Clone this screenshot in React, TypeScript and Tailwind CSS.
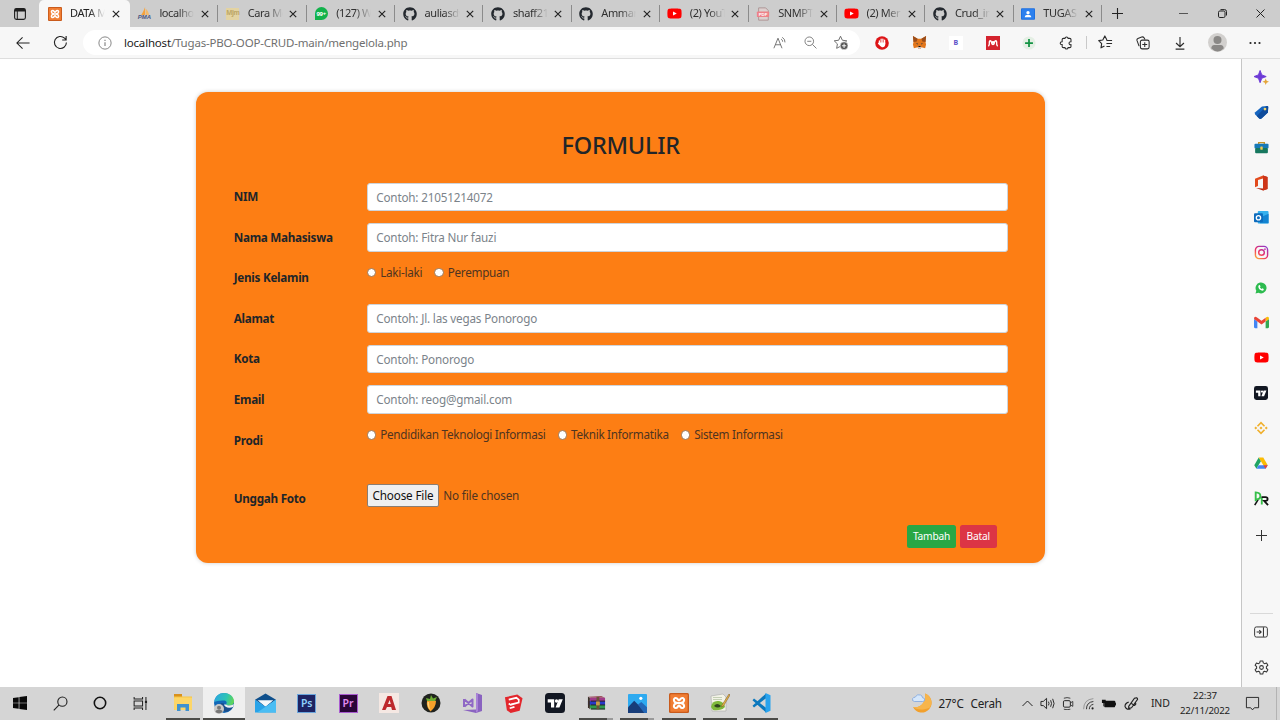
import React from "react";
import { FaGithub, FaWhatsapp, FaYoutube } from "react-icons/fa";

type IconProps = { s?: number; className?: string };
type SvgProps = { s?: number; vb?: number; className?: string; children: React.ReactNode };

function Svg({ s = 16, vb = 16, className = "", children }: SvgProps) {
  return (
    <svg width={s} height={s} viewBox={`0 0 ${vb} ${vb}`} fill="none" className={`shrink-0 ${className}`}>
      {children}
    </svg>
  );
}

/* ---------- brand icons ---------- */

function Xampp({ s = 14 }: IconProps) {
  return (
    <Svg s={s} vb={20}>
      <rect width="20" height="20" rx="1.5" fill="#c95b1c" />
      <rect x="1.3" y="1.3" width="17.4" height="17.4" rx="1" fill="#f07d33" />
      <path
        d="M7.500 10h5M8 9.700C4.500 9.700 3.800 5 6.800 5c2 0 2 2.400 3.200 2.400S11.200 5 13.200 5c3 0 2.300 4.700-1.200 4.700M8 10.300C4.500 10.300 3.800 15 6.800 15c2 0 2-2.400 3.200-2.400s1.200 2.400 3.200 2.400c3 0 2.300-4.700-1.200-4.700"
        stroke="#fff"
        strokeWidth="2.100"
        strokeLinecap="round"
        strokeLinejoin="round"
      />
    </Svg>
  );
}

function PhpMyAdmin() {
  return (
    <div className="flex w-[15px] flex-col items-center">
      <Svg s={9} vb={8} className="-mb-px">
        <path d="M4.500 0v7H1C2.500 5 3.500 3 4.500 0z" fill="#f6a13c" />
        <path d="M5 1.500C7 3 7.800 5 8 7H5z" fill="#f3b96c" />
      </Svg>
      <span className="font-['Liberation_Sans'] text-[6px] leading-[5px] font-bold text-[#4b5580] italic">PMA</span>
    </div>
  );
}

function Mjm() {
  return (
    <div className="flex h-[12px] w-[13px] items-center justify-center bg-[#e3d3a2] text-[6.500px] leading-none font-bold tracking-[-0.5px] text-[#bda766]">
      Mjm
    </div>
  );
}

function WhatsappBadge() {
  return (
    <div className="flex size-[13px] items-center justify-center rounded-full rounded-bl-[3px] bg-[#12b24b] text-[6px] leading-none font-bold tracking-[-0.3px] text-white">
      99+
    </div>
  );
}

function PdfIcon() {
  return (
    <Svg s={14}>
      <path d="M3 1h8l3 3v11H3z" fill="#ddd0cf" stroke="#a98f8f" />
      <rect x="1" y="5" width="14" height="6.500" rx="1" fill="#ee8288" />
      <text x="8" y="10" fontSize="5" fontWeight="700" textAnchor="middle" fill="#fff" fontFamily="Liberation Sans">PDF</text>
    </Svg>
  );
}

function YoutubeIcon({ s = 14 }: IconProps) {
  return (
    <span className="relative flex items-center justify-center">
      <span className="absolute h-[5px] w-[5px] bg-white" />
      <FaYoutube size={s} color="#f00" className="relative" />
    </span>
  );
}

function ClassroomIcon() {
  return (
    <Svg s={14}>
      <rect y="1.500" width="16" height="13" rx="1" fill="#1c6fe0" />
      <rect x="1" y="2.500" width="14" height="11" fill="#2c80ee" />
      <circle cx="8" cy="6.500" r="1.900" fill="#fff" />
      <path d="M4.300 11.600c0-3.600 7.400-3.600 7.400 0z" fill="#fff" />
    </Svg>
  );
}

function TradingView({ s = 14 }: IconProps) {
  return (
    <Svg s={s} vb={20}>
      <rect width="20" height="20" rx="3.500" fill="#121722" />
      <path d="M2.700 6.300h6.500v8.200H6V9.600H2.700zM13.700 6.300h4.100l-3.400 8.200h-3.800z" fill="#fff" />
      <circle cx="11.500" cy="8" r="1.650" fill="#fff" />
    </Svg>
  );
}

/* ---------- toolbar glyphs ---------- */

const CloseX = () => (
  <Svg s={8} vb={8}>
    <path d="M.8.8l6.400 6.400M7.200.8L.8 7.200" stroke="#222" strokeWidth="1.150" />
  </Svg>
);

const StarPath = "M8 1.300l2 4.300 4.700.6-3.400 3.300.8 4.700L8 12l-4.100 2.200.8-4.700L1.300 6.200 6 5.600z";

const tabs: { icon: React.ReactNode; title: string }[] = [
  { icon: <PhpMyAdmin />, title: "localhos" },
  { icon: <Mjm />, title: "Cara Me" },
  { icon: <WhatsappBadge />, title: "(127) W" },
  { icon: <FaGithub size={14} color="#24292f" />, title: "auliasdy" },
  { icon: <FaGithub size={14} color="#24292f" />, title: "shaff210" },
  { icon: <FaGithub size={14} color="#24292f" />, title: "Ammar" },
  { icon: <YoutubeIcon s={15} />, title: "(2) YouT" },
  { icon: <PdfIcon />, title: "SNMPT" },
  { icon: <YoutubeIcon s={15} />, title: "(2) Mer" },
  { icon: <FaGithub size={14} color="#24292f" />, title: "Crud_ins" },
  { icon: <ClassroomIcon />, title: "TUGAS" },
];

function Tab({ icon, title, active = false }: { icon: React.ReactNode; title: string; active?: boolean }) {
  return (
    <div
      className={`flex shrink-0 items-center ${
        active ? "h-[27px] w-[90.900px] rounded-t-[5px] bg-[#f7f7f7] pl-[1.500px]" : "h-[17px] w-[88.400px] border-r border-[#8b8b8b]"
      }`}
    >
      <div className="flex w-[29px] justify-center">{icon}</div>
      <div
        className={`ml-[0.500px] w-[35px] overflow-hidden mask-r-from-55% text-[11px] tracking-[-0.400px] whitespace-nowrap ${
          active ? "text-[#222]" : "text-[#303030]"
        }`}
      >
        {title}
      </div>
      <div className="ml-[5.500px] flex w-[10px] justify-center">
        <CloseX />
      </div>
    </div>
  );
}

function TabStrip() {
  return (
    <div className="flex h-[27px] shrink-0 items-center bg-[#cdcdcd]">
      <div className="flex w-[39px] justify-center pl-[1px]">
        <Svg s={12} vb={12}>
          <rect x=".6" y=".6" width="10.800" height="10.800" rx="1.800" stroke="#1d1d1d" strokeWidth="1.100" />
          <path d="M.6 3.400V2.200Q.6.600 2.200.600h7.600q1.600 0 1.600 1.600v1.200z" fill="#1d1d1d" />
          <path d="M3.300 3v8" stroke="#1d1d1d" />
        </Svg>
      </div>
      <Tab icon={<Xampp />} title="DATA M" active />
      {tabs.map((t, i) => (
        <Tab key={i} icon={t.icon} title={t.title} />
      ))}
      <div className="flex w-[31px] justify-center">
        <Svg s={11} vb={11}>
          <path d="M5.500 0v11M0 5.500h11" stroke="#222" strokeWidth="1.100" />
        </Svg>
      </div>
      <div className="ml-auto flex items-center">
        <div className="flex w-[38.500px] justify-center">
          <Svg s={9} vb={9}><path d="M0 4.500h9" stroke="#555" /></Svg>
        </div>
        <div className="flex w-[38.500px] justify-center">
          <Svg s={9} vb={9}>
            <rect x=".5" y="2" width="6.500" height="6.500" rx="1.300" stroke="#222" />
            <path d="M2.500.600h4Q8.500.600 8.500 2.500v4" stroke="#222" />
          </Svg>
        </div>
        <div className="flex w-[38.500px] justify-center">
          <Svg s={9} vb={9}><path d="M.5.500l8 8M8.500.500l-8 8" stroke="#222" /></Svg>
        </div>
      </div>
    </div>
  );
}

const extensions: React.ReactNode[] = [
  <Svg s={14}>
    <circle cx="8" cy="8" r="7.800" fill="#dd1417" />
    <path d="M5 9V5.500M7 8V3.500M9 8V3.500M11 9V4.700" stroke="#fff" strokeWidth="1.400" strokeLinecap="round" />
    <path d="M4.300 7.500h7.400v2c0 4.500-4.500 4-6 1.700L3.200 8.500z" fill="#fff" />
  </Svg>,
  <Svg s={15}>
    <path d="M1 1l5 3h4l5-3-.7 6L15 10l-1 4-4-1-1 2H7l-1-2-4 1-1-4 .7-3z" fill="#e2761b" />
    <path d="M1 1l5 3-1 3-3.500.5zM15 1l-5 3 1 3 3.500.5z" fill="#9a4d1b" />
    <path d="M6 13l1-1h2l1 1-1 2H7z" fill="#d7c1b3" />
    <path d="M4 8.500l2.500.8-.5.900zM12 8.500l-2.500.8.5.900z" fill="#233447" />
    <path d="M7 11.800h2l.3 1H6.700z" fill="#161616" />
  </Svg>,
  <span className="flex size-[14px] items-center justify-center bg-white text-[7px] leading-none font-bold text-[#5b50c8]">B</span>,
  <Svg s={14}>
    <rect width="16" height="16" fill="#d4232e" />
    <circle cx="8" cy="7.300" r="1.700" fill="#fff" />
    <path d="M3 11.200Q4 10 3.800 8.300 3.500 5.600 5 5.400q1.200 0 1.400 2.400.4 2 1.600 2t1.600-2Q9.800 5.400 11 5.400q1.500.2 1.200 2.900-.2 1.700.8 2.900" stroke="#fff" strokeWidth="1.500" strokeLinecap="round" />
  </Svg>,
  <Svg s={14}>
    <circle cx="8" cy="8" r="7.500" fill="#e4efe4" />
    <path d="M8 3.500v9M3.500 8h9" stroke="#129343" strokeWidth="2" />
  </Svg>,
  <Svg s={14}>
    <path d="M5 2.700h1.800C7 .6 10.200.6 10.400 2.700h1.900q1.400 0 1.400 1.400v2.400c-3-.4-3 3.700 0 3.400v2q0 1.400-1.400 1.400h-1.900c-.2 2.200-3.400 2.200-3.600 0H5q-1.400 0-1.400-1.400V9.800C.6 9.600.6 6.700 3.600 6.500V4.100Q3.600 2.700 5 2.700z" stroke="#2b2b2b" strokeWidth="1.200" />
  </Svg>,
];

const actions: React.ReactNode[] = [
  <Svg s={15}>
    <path d="M9.500 5.300L7.300 1 5.100 5.300.800 6l3.100 3.200-.7 4.500 3.700-2" stroke="#2b2b2b" strokeWidth="1.200" strokeLinejoin="round" />
    <path d="M9 5.800h6M9 9h6M9 12.200h4" stroke="#2b2b2b" strokeWidth="1.200" />
  </Svg>,
  <Svg s={14}>
    <rect x="5" y="4.700" width="10" height="10" rx="2" stroke="#2b2b2b" strokeWidth="1.200" />
    <path d="M10 7v5.500M7.200 9.700h5.600M3.500 11.500L1.200 5.300q-.6-1.800 1-2.500l4.300-1.600q1.700-.6 2.700.9L10.300 4" stroke="#2b2b2b" strokeWidth="1.200" />
  </Svg>,
  <Svg s={14}>
    <path d="M8 1v11M3.500 8L8 12.300 12.500 8M3 15h10" stroke="#2b2b2b" strokeWidth="1.300" />
  </Svg>,
  <Svg s={19} vb={19}>
    <circle cx="9.500" cy="9.500" r="9.500" fill="#d2d0ce" />
    <circle cx="9.500" cy="7" r="4" fill="#8a8886" />
    <path d="M3.300 15.500q0-3.500 3-3.500h6.400q3 0 3 3.500-6 6-12.400 0z" fill="#8a8886" />
  </Svg>,
  <Svg s={12} vb={12}>
    <circle cx="1.500" cy="6" r="1.100" fill="#222" />
    <circle cx="6" cy="6" r="1.100" fill="#222" />
    <circle cx="10.500" cy="6" r="1.100" fill="#222" />
  </Svg>,
];

function Toolbar() {
  return (
    <div className="flex h-[32px] shrink-0 items-center border-b border-[#dedede] bg-[#f7f7f7]">
      <div className="flex w-[83px] items-center">
        <Svg s={14} className="ml-[16px]">
          <path d="M15.500 8H1M7.500 1.500L1 8l6.500 6.500" stroke="#222" strokeWidth="1.200" />
        </Svg>
        <Svg s={15} className="ml-[23px]">
          <path d="M14.300 8A6.400 6.400 0 1 1 12.300 3.300L14 5M14 1v4.300H9.800" stroke="#222" strokeWidth="1.200" />
        </Svg>
      </div>
      <div className="flex h-[25px] w-[776.500px] items-center rounded-full bg-white">
        <Svg s={14} className="ml-[15px]">
          <circle cx="8" cy="8" r="7" stroke="#777" />
          <path d="M8 7v4.500M8 4.300v1.300" stroke="#777" strokeWidth="1.200" />
        </Svg>
        <div className="ml-[12px] text-[11.500px] tracking-[-0.190px] whitespace-nowrap text-[#6f6f6f]">
          <span className="text-[#1c1c1c]">localhost</span>/Tugas-PBO-OOP-CRUD-main/mengelola.php
        </div>
        <div className="ml-auto flex items-center">
          <div className="flex w-[30px] items-center justify-center">
            <Svg s={14}>
              <path d="M1 14L5.700 2.500 10.300 14M2.600 10h6.200M9.300 3.500q1.800 1 1.700 3M10.500 1.500Q14 3.500 13.700 7.300" stroke="#666" />
            </Svg>
          </div>
          <div className="flex w-[30px] items-center justify-center">
            <Svg s={13}>
              <circle cx="6.500" cy="6.500" r="5.300" stroke="#666" />
              <path d="M10.300 10.300l5 5M4 6.500h5" stroke="#666" />
            </Svg>
          </div>
          <div className="flex w-[30px] items-center justify-center">
            <Svg s={15}>
              <path d={StarPath} stroke="#666" />
              <circle cx="11.800" cy="11.500" r="4.200" fill="#555" stroke="#fff" strokeWidth=".6" />
              <path d="M11.800 9.200v4.600M9.500 11.500h4.600" stroke="#fff" />
            </Svg>
          </div>
          <div className="w-[4.500px]" />
        </div>
      </div>
      <div className="ml-[4.500px] flex items-center">
        {extensions.map((e, i) => (
          <div key={i} className="flex w-[36.750px] items-center justify-center">{e}</div>
        ))}
      </div>
      <div className="ml-[1.500px] flex h-[13px] items-center border-l border-[#c9c9c9]">
        {actions.map((e, i) => (
          <div key={i} className="flex w-[37.400px] items-center justify-center">{e}</div>
        ))}
      </div>
    </div>
  );
}

/* ---------- form ---------- */

function Label({ children }: { children: React.ReactNode }) {
  return (
    <label className="w-[133px] shrink-0 text-[11.700px] leading-[18px] font-bold tracking-[-0.280px] text-[#212529]">{children}</label>
  );
}

function TextRow({ label, placeholder }: { label: string; placeholder: string }) {
  return (
    <div className="flex h-[40.550px] items-start">
      <div className="flex h-[27.500px] items-center">
        <Label>{label}</Label>
      </div>
      <input
        className="h-[28.500px] min-w-0 flex-1 rounded-[3px] border border-[#ced4da] bg-white px-[8.500px] text-[11.700px] tracking-[-0.180px] text-[#495057] outline-none placeholder:text-[#7b838a] placeholder:opacity-100"
        placeholder={placeholder}
      />
    </div>
  );
}

function RadioRow({ label, options, name }: { label: string; name: string; options: string[] }) {
  return (
    <div className="flex h-[40.550px] items-start">
      <div className="flex h-[27.500px] items-center">
        <Label>{label}</Label>
      </div>
      <div className="flex gap-[12px]">
        {options.map((o) => (
          <label key={o} className="flex h-[18px] items-center gap-[4px] text-[11.700px] tracking-[-0.280px] whitespace-nowrap text-[#4f3420]">
            <input type="radio" name={name} className="size-[9.500px] appearance-none rounded-full border border-[#9c7450] bg-white" />
            {o}
          </label>
        ))}
      </div>
    </div>
  );
}

function Form() {
  return (
    <main className="flex min-w-0 flex-1 justify-center bg-white pt-[33px]">
      <form className="flex h-[470.500px] w-[849.500px] flex-col rounded-[12px] bg-[#fd7e14] pr-[37.500px] pl-[38px] shadow-[0_0_4px_rgba(0,0,0,0.2)]">
        <h1 className="mt-[36px] text-center text-[23.500px] leading-[34px] font-medium tracking-[-0.250px] text-[#212529]">FORMULIR</h1>
        <div className="mt-[20.500px] flex flex-col">
          <TextRow label="NIM" placeholder="Contoh: 21051214072" />
          <TextRow label="Nama Mahasiswa" placeholder="Contoh: Fitra Nur fauzi" />
          <RadioRow label="Jenis Kelamin" name="jk" options={["Laki-laki", "Perempuan"]} />
          <TextRow label="Alamat" placeholder="Contoh: Jl. las vegas Ponorogo" />
          <TextRow label="Kota" placeholder="Contoh: Ponorogo" />
          <TextRow label="Email" placeholder="Contoh: reog@gmail.com" />
          <RadioRow
            label="Prodi"
            name="prodi"
            options={["Pendidikan Teknologi Informasi", "Teknik Informatika", "Sistem Informasi"]}
          />
        </div>
        <div className="mt-[18px] flex items-start">
          <div className="flex h-[27.500px] items-center">
            <Label>Unggah Foto</Label>
          </div>
          <div className="flex items-center gap-[4px] text-[11.700px] tracking-[-0.150px]">
            <button
              type="button"
              className="h-[22.500px] w-[72.500px] rounded-[2px] border border-[#8a7d72] bg-[#efefef] whitespace-nowrap text-[#111]"
            >
              Choose File
            </button>
            <span className="text-[#4f3420]">No file chosen</span>
          </div>
        </div>
        <div className="mt-[13px] flex justify-end gap-[3.500px] pr-[11px] text-[10.200px] tracking-[-0.200px] text-white">
          <button type="button" className="h-[23px] w-[49.500px] rounded-[2.500px] bg-[#28a745] pt-[1.500px]">Tambah</button>
          <button type="button" className="h-[23px] w-[37px] rounded-[2.500px] bg-[#dc3545] pt-[1.500px]">Batal</button>
        </div>
      </form>
    </main>
  );
}

/* ---------- sidebar ---------- */

const sideIcons: React.ReactNode[] = [
  <Svg s={15}>
    <path d="M6.500.500l1.800 4.700L13 7 8.300 8.800 6.500 13.500 4.700 8.800 0 7l4.700-1.800z" fill="#6d3bd6" stroke="#6d3bd6" strokeLinejoin="round" />
    <path d="M12.500 9l1 2.500 2.500 1-2.500 1-1 2.500-1-2.500-2.500-1 2.500-1z" fill="#e5a63b" />
  </Svg>,
  <Svg s={15}>
    <path d="M8.500 1.500L14 1q1.200 0 1.200 1.200L14.800 8 8 14.300q-1.300 1-2.500 0L1.300 10q-1-1.200 0-2.400z" fill="#1565c0" />
    <path d="M3 11.700L13 1.200l1-.2q1.200 0 1.200 1.200L14.800 8 8 14.300q-1.300 1-2.500 0z" fill="#0f4c9c" />
    <circle cx="11.700" cy="4.300" r="1.500" fill="#f3d56b" />
  </Svg>,
  <Svg s={15}>
    <path d="M5 4.500V2.800h6v1.700" stroke="#c79326" strokeWidth="1.500" />
    <rect x=".5" y="4" width="15" height="5" rx="1" fill="#1779b8" />
    <rect x="1.200" y="8.500" width="13.600" height="5.500" rx="1" fill="#17785f" />
    <rect x="6.700" y="7" width="2.600" height="3.300" rx=".5" fill="#f1cb54" />
  </Svg>,
  <Svg s={16}>
    <path d="M10 .5l4.500 1.500v12L10 15.500l-7-2.600 7 .6z" fill="#b7260f" />
    <path d="M10 .5L2 3.700v8.500L5 11V5l5-1.500z" fill="#e24a1c" />
    <path d="M10 .5l4.500 1.500v12L10 15.500z" fill="#ce3518" />
  </Svg>,
  <Svg s={15}>
    <rect x="4" y="1" width="11.500" height="13.500" rx="1" fill="#35b1ee" />
    <path d="M9 7l6.500-3v10H6z" fill="#1384d2" />
    <rect y="3.500" width="9.500" height="9.500" rx="1" fill="#0d6cbd" />
    <circle cx="4.750" cy="8.250" r="2.300" stroke="#fff" strokeWidth="1.400" />
  </Svg>,
  <Svg s={15}>
    <defs>
      <linearGradient id="ig" gradientUnits="userSpaceOnUse" x1="2" y1="15" x2="13" y2="1">
        <stop offset="0" stopColor="#fdb833" />
        <stop offset=".45" stopColor="#ee2d62" />
        <stop offset="1" stopColor="#8a3ad0" />
      </linearGradient>
    </defs>
    <rect x="1.500" y="1.500" width="13" height="13" rx="3.800" stroke="url(#ig)" strokeWidth="1.500" />
    <circle cx="8" cy="8" r="3" stroke="url(#ig)" strokeWidth="1.500" />
    <circle cx="11.700" cy="4.400" r=".9" fill="#c837ab" />
  </Svg>,
  <span className="relative flex items-center justify-center">
    <Svg s={12} vb={12}>
      <path d="M.5 11.500L1.300 8.700A5.500 5.500 0 1 1 3.500 10.800z" fill="#2dbb4f" />
      <path d="M4 3.300q1-.6 1.300.6l.2.800-.6.600q.6 1.200 1.800 1.700l.7-.7 1.300.6q.5 1.600-1.500 1.800Q3.500 8 3.300 4.600q0-.8.7-1.300z" fill="#fff" />
    </Svg>
  </span>,
  <Svg s={15}>
    <path d="M0 4.200l3.600 2.700V14H1.200Q0 14 0 12.800z" fill="#4285f4" />
    <path d="M12.400 6.900L16 4.200v8.600q0 1.200-1.200 1.200h-2.400z" fill="#34a853" />
    <path d="M12.400 2.800Q16 .5 16 4.200l-3.600 2.700z" fill="#fbbc04" />
    <path d="M0 4.200Q0 .5 3.600 2.800L8 6.100l4.400-3.300v4.100L8 10.200 0 4.200z" fill="#ea4335" />
  </Svg>,
  <YoutubeIcon s={15} />,
  <TradingView s={14} />,
  <Svg s={14}>
    <path d="M4 6L8 2l4 4M4 10l4 4 4-4" stroke="#f0b02e" strokeWidth="2" />
    <path d="M8 6.200L9.800 8 8 9.800 6.200 8zM2 6.300L3.700 8 2 9.700.3 8zM14 6.300L15.700 8 14 9.700 12.300 8z" fill="#f0b02e" />
  </Svg>,
  <Svg s={14}>
    <path d="M5.400 1.800L.3 10.500l2.500 4L8 5.800z" fill="#1fa463" />
    <path d="M5.400 1.800h5.200l5.100 8.700h-5z" fill="#fbbc04" />
    <path d="M2.800 14.500l2.500-4h10.400l-2.500 4z" fill="#4285f4" />
    <path d="M13.200 14.500l-2.500-4h5z" fill="#ea4335" />
  </Svg>,
  <Svg s={15}>
    <path d="M.8 15L4.500 9" stroke="#111" strokeWidth="1.700" />
    <path d="M1.800 11V1.500q5 .3 5 3.700T2.500 9M8.300 14.500V7" stroke="#37bf4a" strokeWidth="2" />
    <path d="M8 6.500h4.300q2.200 0 2.200 2t-2.200 2h-1.500l4.200 4.500" stroke="#111" strokeWidth="1.900" />
  </Svg>,
];

function Sidebar() {
  return (
    <aside className="flex w-[39px] shrink-0 flex-col items-center border-l border-[#c6c6c6] bg-[#f7f7f7] pt-[1px]">
      {sideIcons.map((ic, i) => (
        <div key={i} className="flex h-[35.060px] items-center justify-center">{ic}</div>
      ))}
      <div className="flex h-[40px] items-center">
        <Svg s={11} vb={11}><path d="M5.500 0v11M0 5.500h11" stroke="#333" /></Svg>
      </div>
      <div className="mt-auto flex w-[23px] flex-col items-center border-t border-[#d9d9d9] pt-[1px]">
        <div className="flex h-[35px] items-center">
          <Svg s={14}>
            <rect x=".7" y="2.200" width="14.600" height="11.600" rx="2" stroke="#333" strokeWidth="1.100" />
            <path d="M10.800 2.500v11M3 8h5M6 5.800L8.200 8 6 10.200" stroke="#333" strokeWidth="1.200" />
          </Svg>
        </div>
        <div className="flex h-[37px] items-center pb-[1.500px]">
          <Svg s={15}>
            <path
              d="M6.600 1h2.800l.5 2.100 1.300.8 2.200-.7 1.400 2.400-1.600 1.500v1.700l1.600 1.500-1.400 2.400-2.200-.7-1.300.8-.5 2.200H6.600l-.5-2.200-1.300-.8-2.200.7-1.400-2.400 1.600-1.500V7.100L1.200 5.600l1.400-2.400 2.200.7 1.300-.8z"
              stroke="#333"
              strokeWidth="1.100"
              strokeLinejoin="round"
            />
            <circle cx="8" cy="8" r="2" stroke="#333" strokeWidth="1.100" />
          </Svg>
        </div>
      </div>
    </aside>
  );
}

/* ---------- taskbar ---------- */

const systemIcons: React.ReactNode[] = [
  <Svg s={14}>
    <path d="M0 2.200l6.500-.9v6.300H0zM7.300 1.200L16 0v7.600H7.300zM0 8.400h6.500v6.300L0 13.800zM7.300 8.400H16V16l-8.700-1.200z" fill="#0a0a0a" />
  </Svg>,
  <Svg s={15}>
    <circle cx="10" cy="6" r="4.900" stroke="#222" strokeWidth="1.200" />
    <path d="M6.500 9.500L.8 15.300" stroke="#222" strokeWidth="1.200" />
  </Svg>,
  <Svg s={14}><circle cx="8" cy="8" r="6.500" stroke="#111" strokeWidth="1.800" /></Svg>,
  <Svg s={15}>
    <path d="M1.200 1v2.300h9V1M1.200 15v-2.300h9V15M1.200 5.300h9v5.400h-9zM13.800 1v4M13.800 8v7" stroke="#222" strokeWidth="1.100" />
    <rect x="12.700" y="5" width="2.300" height="2.800" fill="#222" />
  </Svg>,
];

function Adobe({ children, premiere = false }: { children: React.ReactNode; premiere?: boolean }) {
  return (
    <span
      className={`flex size-[19px] items-center justify-center border text-[10.500px] leading-none font-semibold ${
        premiere ? "border-[#a95bd0] bg-[#2a0638] text-[#e08cf0]" : "border-[#6aa5dc] bg-[#1d2363] text-[#8fd0fb]"
      }`}
    >
      {children}
    </span>
  );
}

type TaskItem = { icon: React.ReactNode; state?: "open" | "focused" | "stacked" };

const apps: TaskItem[] = [
  {
    state: "open",
    icon: (
      <Svg s={20} vb={20}>
        <path d="M1 1.500h7l1.500 2H19V17H1z" fill="#f6c646" />
        <path d="M1 1h8v2.500H1z" fill="#d9911d" />
        <rect x="1" y="4.500" width="18" height="12.500" rx=".7" fill="#fdd667" />
        <path d="M4 18v-7h12v7h-3.500v-3.500h-5V18z" fill="#3f92d0" />
      </Svg>
    ),
  },
  {
    state: "focused",
    icon: (
      <Svg s={22} vb={22}>
        <defs>
          <linearGradient id="edgeTop" x1="0" y1=".3" x2="1" y2=".5">
            <stop offset="0" stopColor="#2ba6e0" />
            <stop offset=".6" stopColor="#2cc4b5" />
            <stop offset="1" stopColor="#62d656" />
          </linearGradient>
        </defs>
        <circle cx="11" cy="11" r="10" fill="#1268b8" />
        <path d="M1.200 10C2 4 6 1 11 1c6 0 10 4 10 8.500 0 4.500-6.500 5-8 3 1.500-2 .5-4-2.500-4-4 0-8 1-9.300 1.500z" fill="url(#edgeTop)" />
        <path d="M8 11c-2 3 0 7.500 4.500 9 4-.7 6.500-3 7.500-5-4 1.500-9.500.5-9-3.500z" fill="#1c4f8c" />
        <path d="M13 12.500q2 2.200 8-.2l-1 2.700c-4 1.500-8.500.5-9-2.500z" fill="#f0f0f0" />
        <circle cx="6" cy="17" r="5" fill="#c9c8c7" />
        <circle cx="6" cy="15.700" r="2" fill="#777" />
        <path d="M2.500 20q0-2.300 3.500-2.300T9.500 20q-3.500 2.700-7 0z" fill="#777" />
      </Svg>
    ),
  },
  {
    icon: (
      <Svg s={21} vb={20}>
        <path d="M0 6.500L10 .5l10 6-10 7z" fill="#0e4f8c" />
        <path d="M2.500 7h15L10 13z" fill="#f4f8fb" />
        <path d="M0 6.500l10 6.500 10-6.500V18.500H0z" fill="#28a3e8" />
        <path d="M20 6.500v12H2z" fill="#4abdf3" />
      </Svg>
    ),
  },
  { icon: <Adobe>Ps</Adobe> },
  { icon: <Adobe premiere>Pr</Adobe> },
  {
    icon: (
      <Svg s={20} vb={20}>
        <rect width="20" height="20" fill="#f5e8e3" />
        <path d="M3 17L8.500 3h4L17 17h-4l-.8-3H8l-1.500 3zM9 11h2.800l-1.200-4z" fill="#bd282c" fillRule="evenodd" />
      </Svg>
    ),
  },
  {
    icon: (
      <Svg s={20} vb={20}>
        <circle cx="10" cy="10" r="9.500" fill="#20231f" />
        <path d="M6 8q5-3 9 0 0 6-5.500 10.500Q5 14 6 8z" fill="#f5a02a" />
        <path d="M8 9q0 5 1.500 8Q6 14 6.500 9z" fill="#ffd278" />
        <path d="M5 5l4 1 1-4 2 3.500 4-1.500-2 4H6z" fill="#6fae34" />
      </Svg>
    ),
  },
  {
    icon: (
      <Svg s={20} vb={20}>
        <path d="M14 0l6 2v16l-6 2-13-3 13-.5z" fill="#8a63c0" />
        <path d="M2 6v8M2.500 6.500l8 7V6.500l-8 7" stroke="#8f68c5" strokeWidth="2" strokeLinejoin="round" />
        <path d="M14 0l2 1v17l-2 2z" fill="#a983d8" />
      </Svg>
    ),
  },
  {
    icon: (
      <Svg s={19} vb={20}>
        <path d="M1 3.500L14 .5l5.500 4-3 13L7 20l-4-3z" fill="#e3262c" />
        <path d="M5 6l8-2 2.500 2v3l-8 2M5 10l2 1.500L14 9.500M6 15l5-1.500" stroke="#fff" strokeWidth="1.800" />
      </Svg>
    ),
  },
  { icon: <TradingView s={20} /> },
  {
    state: "stacked",
    icon: (
      <Svg s={19} vb={20}>
        <path d="M1 3l14-1 4 2H4z" fill="#9c4c5c" />
        <path d="M3 4h16v4H3z" fill="#a0398a" />
        <path d="M1 7.500h18v4H1z" fill="#2739c8" />
        <path d="M2 11.500h17V16H4z" fill="#2f9a4b" />
        <path d="M1 3l2 1v12l-2-2z" fill="#3c302a" />
        <path d="M4 7.500h15M4 11.500h15M4 15.800h15" stroke="#201c25" />
        <path d="M10 3v13h3V3z" fill="#6b5238" />
        <rect x="9.500" y="8" width="4" height="4" fill="#c69c48" />
      </Svg>
    ),
  },
  {
    state: "stacked",
    icon: (
      <Svg s={19} vb={20}>
        <rect width="20" height="20" rx="1" fill="#2eaaf0" />
        <path d="M0 14l6.500-7 13 13H0z" fill="#173d79" />
        <path d="M10.500 11l3.500-2.500 6 5.500v6h-3z" fill="#2367b7" />
        <circle cx="13.500" cy="4.500" r="1.700" fill="#fff" />
      </Svg>
    ),
  },
  { state: "open", icon: <Xampp s={20} /> },
  {
    state: "open",
    icon: (
      <Svg s={20} vb={20}>
        <path d="M1 3l12-2 3 3v14H2z" fill="#f3f3e7" stroke="#aaa" strokeWidth=".6" />
        <path d="M3 4.500h9M3 6.500h9" stroke="#b7c5a8" strokeWidth=".8" />
        <path d="M1 14Q2 7 9 8q5 1 6 6-4 4-12 3z" fill="#7fb93b" />
        <path d="M4 13q3-4 7 0-3 3-7 0z" fill="#31451d" />
        <path d="M19 1l-7 11-.5 2 2-1L20 2z" fill="#e7b544" stroke="#735125" strokeWidth=".5" />
      </Svg>
    ),
  },
  {
    state: "open",
    icon: (
      <Svg s={20} vb={20}>
        <path d="M15 .5v19L1.500 7.200 3 5.500l12 9.300V5.200L3 14.500 1.500 12.800z" fill="#0b78bd" />
        <path d="M14.500 0L19.500 2.300v15.400l-5 2.300z" fill="#29a3ee" />
      </Svg>
    ),
  },
];

function TaskApp({ icon, state }: TaskItem) {
  return (
    <div
      className={`flex h-full w-[41.350px] shrink-0 flex-col items-center ${state === "focused" ? "bg-[#efefef]" : ""}`}
    >
      <div className="flex w-full flex-1 items-center justify-center pt-[2px]">{icon}</div>
      <div className={`flex h-[2px] ${state === "focused" ? "w-full" : "w-[34px]"} ${state ? "bg-[#4b4b48]" : ""}`}>
        {state === "stacked" && <div className="ml-auto w-[6px] bg-[#999]" />}
      </div>
    </div>
  );
}

function Taskbar() {
  return (
    <footer className="flex h-[33.500px] shrink-0 items-center bg-[#d5d5d5]">
      {systemIcons.map((ic, i) => (
        <div key={i} className="flex w-[40px] shrink-0 justify-center">{ic}</div>
      ))}
      <div className="ml-[2px] flex h-full">
        {apps.map((a, i) => (
          <TaskApp key={i} {...a} />
        ))}
      </div>
      <div className="ml-auto flex items-center text-[#222]">
        <Svg s={20} vb={20}>
          <path d="M13 .5a9.800 9.800 0 1 1-12 13.500C9 16 14.500 8 13 .5z" fill="#f2a02c" />
          <path d="M13 .5a9.800 9.800 0 0 1 5 14C10 18 4 16.500 1 14 9 16 14.500 8 13 .5z" fill="#f7b54c" />
          <path d="M2.500 8.500Q-.5 8 .7 5.500 1.500 4 3.200 4.200 5 .5 8.500 2q2 .8 2 2.700 2.500.3 2.200 2.300-.3 1.500-2 1.500z" fill="#d5e7fb" stroke="#7da5dd" strokeWidth=".8" />
        </Svg>
        <span className="ml-[7px] w-[32px] pt-[2px] text-[11.700px] tracking-[-0.150px]">27°C</span>
        <span className="w-[50px] pt-[2px] text-[11.700px] tracking-[-0.200px]">Cerah</span>
        <div className="flex w-[14px] justify-center">
          <Svg s={11} vb={11}><path d="M.5 8L5.500 3l5 5" stroke="#222" /></Svg>
        </div>
        <div className="flex w-[26px] justify-center">
          <Svg s={15}>
            <path d="M1 5.800h2.500L7 2.500v11l-3.500-3.300H1z" stroke="#222" />
            <path d="M9 6q1.200 2 0 4M11.300 4.500q2 3.500 0 7M13.500 3q3 5 0 10" stroke="#222" />
          </Svg>
        </div>
        <div className="flex w-[14px] justify-center">
          <Svg s={13}>
            <rect x="3" y="4.500" width="8.500" height="8" rx="1.500" stroke="#222" strokeWidth="1.200" />
            <path d="M3.500 1.500q4-1.500 8 0M3.500 15q4 1.300 8 0M12 7l2.500-1.500v6L12 10" stroke="#222" />
          </Svg>
        </div>
        <div className="flex w-[27px] justify-center">
          <Svg s={13}>
            <path d="M2 15Q2 3 14 2" stroke="#888" />
            <path d="M5.500 15Q5.500 6.500 14 5.500M9 15q0-5 5-6" stroke="#333" strokeWidth="1.200" />
            <circle cx="13" cy="14" r="1.300" fill="#222" />
          </Svg>
        </div>
        <div className="flex w-[14px] justify-center">
          <Svg s={15}>
            <rect x="3.500" y="5" width="11.500" height="7" rx=".7" fill="#111" />
            <path d="M15 7h1v3h-1zM1 4h4v3.500H1z" fill="#111" />
            <path d="M3 7v4" stroke="#111" />
          </Svg>
        </div>
        <div className="flex w-[32px] justify-center">
          <Svg s={15}>
            <path d="M5 11L11 2.500q3.500-1.500 3.500 1L8 12.500l-3 .5zM8 8l3 2q2.500-1 1-3M5 6.500Q.5 8 1.200 11.500 3 15.500 7 13.500" stroke="#222" strokeWidth="1.200" />
          </Svg>
        </div>
        <span className="ml-[3.500px] w-[28.500px] pt-[1px] text-[10.500px] tracking-[-0.200px]">IND</span>
        <div className="flex w-[51px] flex-col items-center text-[9.700px] leading-[15px] tracking-[-0.150px] whitespace-nowrap">
          <span>22:37</span>
          <span>22/11/2022</span>
        </div>
        <Svg s={15} className="ml-[14.500px]">
          <path d="M1.500 1.500h13v11H10l-2 2.300-2-2.300H1.500z" stroke="#222" />
        </Svg>
        <div className="ml-[16px] h-[33px] w-[4px] border-l border-[#b3b3b3]" />
      </div>
    </footer>
  );
}

export default function App() {
  return (
    <div className="flex h-[720px] w-[1280px] flex-col overflow-hidden bg-white font-['Noto_Sans','Open_Sans',sans-serif]">
      <TabStrip />
      <Toolbar />
      <div className="flex min-h-0 flex-1">
        <Form />
        <Sidebar />
      </div>
      <Taskbar />
    </div>
  );
}
